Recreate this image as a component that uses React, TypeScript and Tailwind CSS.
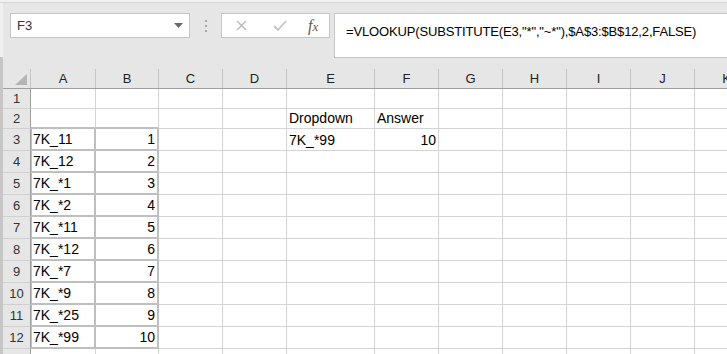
import React from 'react';

const cols = [
    { name: 'A', w: 'w-[65px]' },
    { name: 'B', w: 'w-[63px]' },
    { name: 'C', w: 'w-[64px]' },
    { name: 'D', w: 'w-[64px]' },
    { name: 'E', w: 'w-[88px]' },
    { name: 'F', w: 'w-[64px]' },
    { name: 'G', w: 'w-[64px]' },
    { name: 'H', w: 'w-[64px]' },
    { name: 'I', w: 'w-[64px]' },
    { name: 'J', w: 'w-[64px]' },
    { name: 'K', w: 'w-[64px]' },
];

type Cell = { v: string; right?: boolean };

// sheet data, keyed by row then column index
const data: Record<number, Record<number, Cell>> = {
    2: { 4: { v: 'Dropdown' }, 5: { v: 'Answer' } },
    3: { 0: { v: '7K_11' }, 1: { v: '1', right: true }, 4: { v: '7K_*99' }, 5: { v: '10', right: true } },
    4: { 0: { v: '7K_12' }, 1: { v: '2', right: true } },
    5: { 0: { v: '7K_*1' }, 1: { v: '3', right: true } },
    6: { 0: { v: '7K_*2' }, 1: { v: '4', right: true } },
    7: { 0: { v: '7K_*11' }, 1: { v: '5', right: true } },
    8: { 0: { v: '7K_*12' }, 1: { v: '6', right: true } },
    9: { 0: { v: '7K_*7' }, 1: { v: '7', right: true } },
    10: { 0: { v: '7K_*9' }, 1: { v: '8', right: true } },
    11: { 0: { v: '7K_*25' }, 1: { v: '9', right: true } },
    12: { 0: { v: '7K_*99' }, 1: { v: '10', right: true } },
};

const rows = [1, 2, 3, 4, 5, 6, 7, 8, 9, 10, 11, 12, 13];

function GridRow({ r }: { r: number }) {
    const h = r <= 2 ? 'h-[20px]' : 'h-[22px]';
    return (
        <div className={`flex ${h}`}>
            <div className="w-[28px] shrink-0 flex items-center justify-center bg-[#e6e6e6] border-r border-b border-r-[#9e9e9e] border-b-[#d0d0d0] text-[13px] text-[#333] pt-[1px]">
                {r <= 12 ? r : ''}
            </div>
            {cols.map((c, i) => {
                const cell = data[r]?.[i];
                const boxed = r >= 3 && r <= 12 && i <= 1;
                const aboveBox = r === 2 && i <= 1;
                let border = 'border-r border-b border-[#d4d4d4]';
                if (boxed) border = 'border-r-2 border-b-2 border-[#bfbfbf]';
                else if (aboveBox) border = 'border-r border-b-2 border-r-[#d4d4d4] border-b-[#bfbfbf]';
                return (
                    <div
                        key={c.name}
                        className={`${c.w} shrink-0 flex items-end pb-[3px] text-[14px] text-black leading-none ${border} ${cell?.right ? 'justify-end pr-[2px]' : 'pl-[2px]'} ${boxed && i === 0 ? 'shadow-[inset_1px_0_0_#bfbfbf]' : ''}`}
                    >
                        {cell?.v}
                    </div>
                );
            })}
        </div>
    );
}

export default function App() {
    return (
        <div className="w-[727px] h-[354px] overflow-hidden bg-[#e6e6e6] flex flex-col font-['Liberation_Sans',Arial,sans-serif]">
            {/* top strip */}
            <div className="h-[2px] bg-[#f0f0f0] shrink-0" />
            <div className="h-[1px] bg-[#d6d6d6] shrink-0" />

            <div className="flex flex-1 min-h-0">
                {/* left edge strip */}
                <div className="w-[3px] shrink-0 flex flex-col">
                    <div className="h-[54px] bg-[#f0f0f0]" />
                    <div className="flex-1 bg-[#c6c6c6]" />
                </div>

                <div className="flex-1 flex flex-col min-w-0">
                    {/* formula bar row */}
                    <div className="flex items-start pt-[10px] h-[66px] shrink-0">
                        <div className="ml-[7px] w-[180px] h-[25px] bg-white border border-[#c6c6c6] flex items-center justify-between pl-[6px] pr-[6px]">
                            <span className="text-[13px] text-[#333]">F3</span>
                            <svg width="9" height="5" viewBox="0 0 9 5"><path d="M0 0h9L4.5 5z" fill="#6a6a6a" /></svg>
                        </div>
                        <div className="w-[31px] h-[25px] flex flex-col items-center justify-center gap-[3px]">
                            <span className="w-[2px] h-[2px] bg-[#a8a8a8]" />
                            <span className="w-[2px] h-[2px] bg-[#a8a8a8]" />
                            <span className="w-[2px] h-[2px] bg-[#a8a8a8]" />
                        </div>
                        <div className="w-[109px] h-[25px] bg-white border border-[#c6c6c6] flex items-center">
                            <svg className="ml-[14px]" width="11" height="11" viewBox="0 0 11 11"><path d="M1 1l9 9M10 1l-9 9" stroke="#b8b8b8" strokeWidth="1.3" /></svg>
                            <svg className="ml-[26px]" width="14" height="11" viewBox="0 0 14 11"><path d="M1 6l4 4 8-9" stroke="#c4c4c4" strokeWidth="1.8" fill="none" /></svg>
                            <span className="ml-[21px] text-[16px] italic text-[#5a5a5a] font-['Liberation_Serif',serif] leading-none">f<span className="text-[13px]">x</span></span>
                        </div>
                        <div className="ml-[4px] flex-1 h-[45px] bg-white border-t border-l border-b border-[#c6c6c6] pl-[11px] pt-[8px] text-[13px] tracking-[-0.15px] text-black whitespace-nowrap">
                            =VLOOKUP(SUBSTITUTE(E3,"*","~*"),$A$3:$B$12,2,FALSE)
                        </div>
                    </div>

                    {/* column headers */}
                    <div className="flex h-[20px] shrink-0 bg-[#e6e6e6] border-b border-[#9e9e9e]">
                        <div className="w-[28px] shrink-0 border-r border-[#c6c6c6] relative">
                            <svg className="absolute right-[3px] bottom-[3px]" width="12" height="11" viewBox="0 0 12 11"><path d="M12 0V11H0z" fill="#b4b4b4" /></svg>
                        </div>
                        {cols.map((c) => (
                            <div key={c.name} className={`${c.w} shrink-0 border-r border-[#c6c6c6] flex items-center justify-center text-[13px] text-[#222] pt-[1px]`}>
                                {c.name}
                            </div>
                        ))}
                    </div>

                    {/* rows */}
                    <div className="bg-white flex flex-col">
                        {rows.map((r) => <GridRow key={r} r={r} />)}
                    </div>
                </div>
            </div>
        </div>
    );
}
